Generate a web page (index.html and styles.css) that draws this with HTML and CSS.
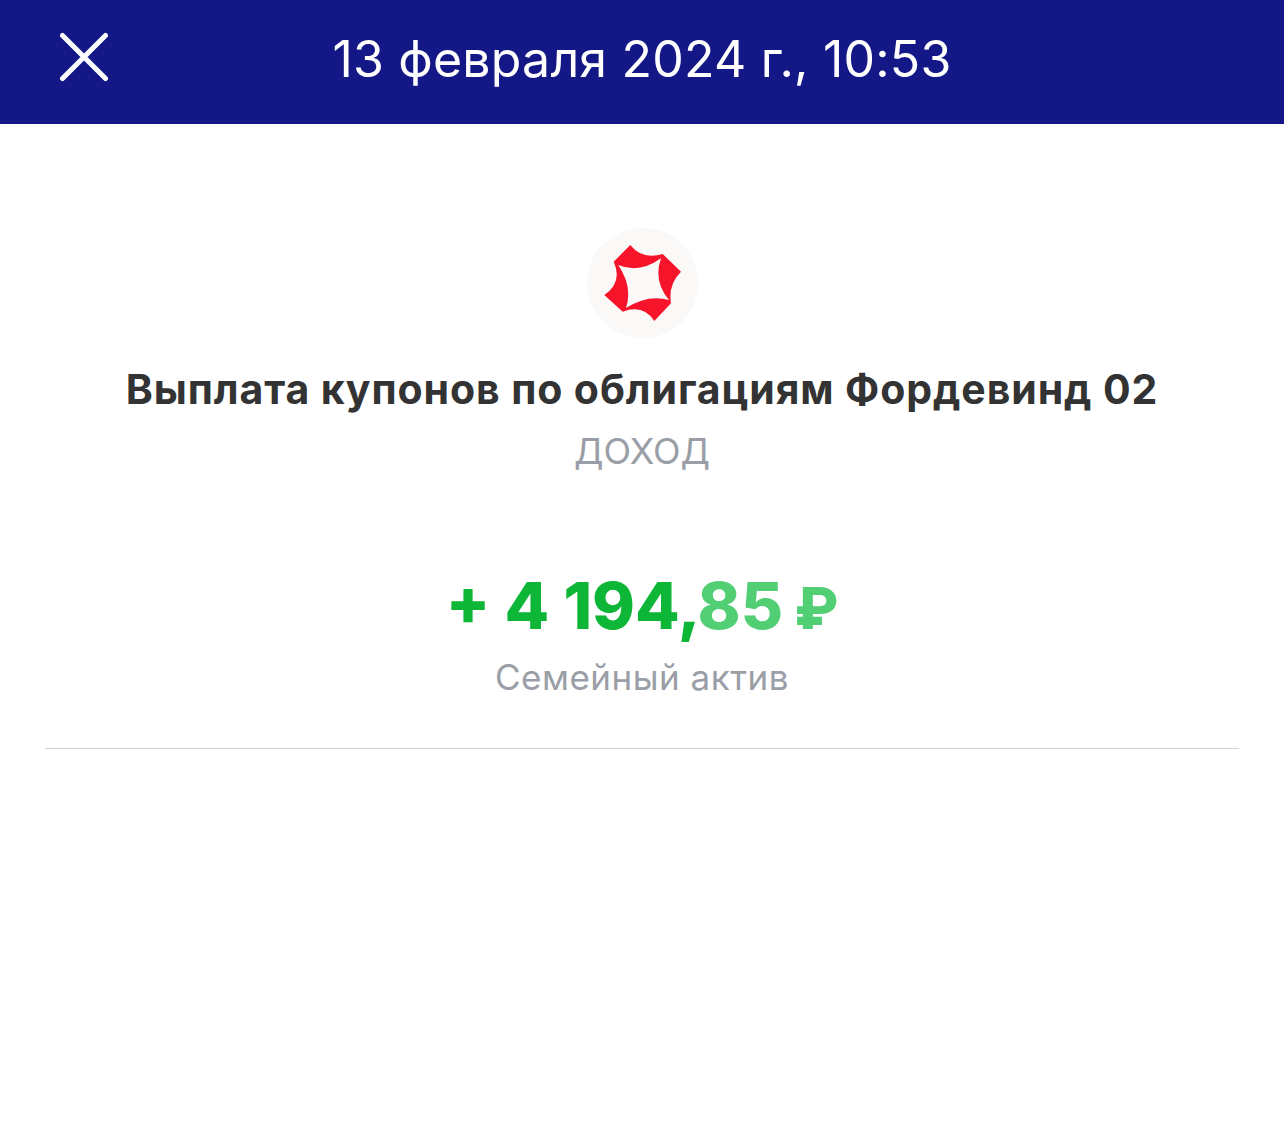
FILE: index.html
```html
<!doctype html>

<html>
<head>
	<title>Операция</title>
	<meta charset="utf-8">
	<link rel="stylesheet" href="styles.css">
</head>

<body>
	<div class="topBar">
		<svg class="closeIcon" width="50" height="50" viewBox="0 0 50 50">
			<path d="M3.5 3.5 L46.5 46.5 M46.5 3.5 L3.5 46.5" stroke="#fff" stroke-width="5" stroke-linecap="round" fill="none"/>
		</svg>
		<div class="topDate">13 февраля 2024 г., 10:53</div>
	</div>

	<div class="details">
		<div class="logo">
			<svg width="111" height="110" viewBox="586 228 111 110">
				<path fill-rule="evenodd" fill="#f5142a" d="M629.3 245 Q641 260 661.7 254 L680 271.7 Q667 284.5 670 303.3 L653.3 321 Q642.5 304 621.7 311.7 L603.3 295 Q622 282 612.7 261.7 Z M617.3 265 Q638 274 660 258.3 Q652 281 668 300 Q647 294 625 308 Q632 287 617.3 265 Z"/>
			</svg>
		</div>
		<div class="title">Выплата купонов по облигациям Фордевинд 02</div>
		<div class="kind">ДОХОД</div>
		<div class="amount">+ 4 194,<span class="cents">85 <span class="rub">₽</span></span></div>
		<div class="account">Семейный актив</div>
	</div>
	<div class="divider"></div>
</body>
</html>
```

FILE: styles.css
```css
html, body { margin: 0px; padding: 0px }
body {
	background-color: #fff;
	font-family: Inter, "Liberation Sans", sans-serif;
}
.topBar {
	height: 124px;
	background-color: #141886;
	position: relative;
	display: flex;
	align-items: center;
	justify-content: center;
}
.closeIcon {
	position: absolute;
	left: 59px;
	top: 32px;
}
.topDate {
	color: #fff;
	font-size: 50px;
	letter-spacing: 0.2px;
	padding-bottom: 6px;
}
.details {
	display: flex;
	flex-direction: column;
	align-items: center;
	padding-top: 104px;
}
.logo {
	width: 111px;
	height: 110px;
	border-radius: 50%;
	background-color: #fbf9f8;
}
.logo svg { display: block }
.title {
	margin-top: 27px;
	color: #333;
	font-size: 41px;
	font-weight: 700;
	letter-spacing: 0.9px;
	line-height: 48px;
}
.kind {
	margin-top: 16px;
	color: #9a9ea6;
	font-size: 36px;
	line-height: 44px;
}
.amount {
	margin-top: 95px;
	color: #0db637;
	font-size: 65px;
	font-weight: 800;
	line-height: 76px;
}
.cents {
	color: #52cf75;
	margin-left: -3px;
	word-spacing: -3px;
}
.rub { font-size: 58px }
.account {
	margin-top: 10px;
	color: #9a9ea6;
	font-size: 35px;
	letter-spacing: 0.5px;
	line-height: 42px;
}
.divider {
	height: 1px;
	margin: 50px 45px 0;
	background-color: #d2d2d4;
}
```
